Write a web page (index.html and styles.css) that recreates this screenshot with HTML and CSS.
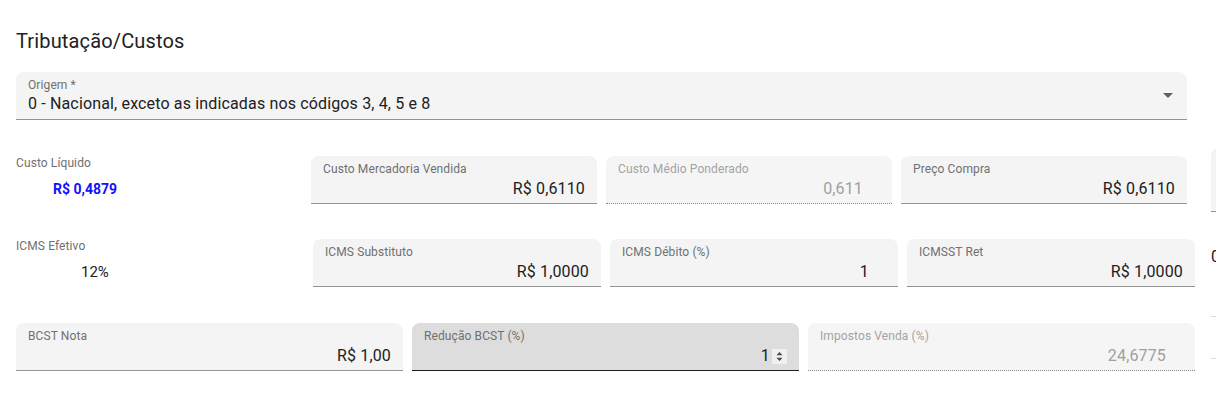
FILE: index.html
```html
<!DOCTYPE html>
<html lang="pt-BR">
<head>
<meta charset="utf-8">
<title>Tributação/Custos</title>
<link rel="stylesheet" href="styles.css">
</head>
<body>
<main class="page">
  <h2 class="title">Tributação/Custos</h2>

  <div class="field select">
    <div class="select-text">
      <span class="label">Origem *</span>
      <span class="select-value">0 - Nacional, exceto as indicadas nos códigos 3, 4, 5 e 8</span>
    </div>
    <svg class="arrow" viewBox="0 0 10 5" width="10" height="5" aria-hidden="true"><path d="M0 0l5 5 5-5z"/></svg>
  </div>

  <div class="row row-1">
    <div class="cell stat">
      <span class="stat-label">Custo Líquido</span>
      <span class="stat-value blue">R$ 0,4879</span>
    </div>
    <div class="cell field">
      <span class="label">Custo Mercadoria Vendida</span>
      <span class="value">R$ 0,6110</span>
    </div>
    <div class="cell field disabled">
      <span class="label">Custo Médio Ponderado</span>
      <span class="value num">0,611</span>
    </div>
    <div class="cell field">
      <span class="label">Preço Compra</span>
      <span class="value">R$ 0,6110</span>
    </div>
    <div class="edge-field"></div>
  </div>

  <div class="row row-2">
    <div class="cell stat">
      <span class="stat-label">ICMS Efetivo</span>
      <span class="stat-value pct">12%</span>
    </div>
    <div class="cell field">
      <span class="label">ICMS Substituto</span>
      <span class="value">R$ 1,0000</span>
    </div>
    <div class="cell field">
      <span class="label">ICMS Débito (%)</span>
      <span class="value num">1</span>
    </div>
    <div class="cell field">
      <span class="label">ICMSST Ret</span>
      <span class="value">R$ 1,0000</span>
    </div>
    <span class="edge-text">0</span>
  </div>

  <div class="row row-3">
    <div class="cell field">
      <span class="label">BCST Nota</span>
      <span class="value">R$ 1,00</span>
    </div>
    <div class="cell field hovered">
      <span class="label">Redução BCST (%)</span>
      <span class="value spin-value">1<svg class="spinner" viewBox="0 0 15 15" width="15" height="15" aria-hidden="true"><rect width="15" height="15" fill="#f0f0f0"/><path d="M4.5 6.3L7.5 3 10.5 6.3z" fill="#4a4a4a"/><path d="M4.5 8.7L10.5 8.7 7.5 12z" fill="#4a4a4a"/></svg></span>
    </div>
    <div class="cell field disabled">
      <span class="label">Impostos Venda (%)</span>
      <span class="value num">24,6775</span>
    </div>
    <div class="edge-lines"></div>
  </div>
</main>
</body>
</html>
```

FILE: styles.css
```css
html, body {
  margin: 0;
  padding: 0;
  overflow: hidden;
  background: #ffffff;
}

body {
  width: 1216px;
  height: 401px;
  font-family: Roboto, "Noto Sans", "Liberation Sans", Arial, sans-serif;
  color: #212121;
}

.page {
  padding: 29px 0 0 16px;
}

.title {
  margin: 0;
  font-size: 20px;
  line-height: 24px;
  font-weight: 400;
  letter-spacing: 0.15px;
  color: #212121;
}

/* filled text field */
.field {
  box-sizing: border-box;
  height: 48px;
  flex-shrink: 0;
  display: flex;
  flex-direction: column;
  padding: 5px 12px 0;
  background: #f4f4f4;
  border-radius: 8px 8px 0 0;
  border-bottom: 1px solid #949494;
}

.label {
  font-size: 12px;
  line-height: 16px;
  letter-spacing: 0.1px;
  color: #707070;
  white-space: nowrap;
}

.value {
  font-size: 16px;
  line-height: 20px;
  margin-top: 2px;
  letter-spacing: 0.15px;
  text-align: right;
  color: #212121;
  white-space: nowrap;
}

.value.num {
  margin-right: 17px;
}

.field.disabled {
  background: #f5f5f5;
  border-bottom: 1px dotted #8a8a8a;
}

.field.disabled .label {
  color: #a3a3a3;
}

.field.disabled .value {
  color: #a0a0a0;
}

.field.hovered {
  background: #dddddd;
  border-bottom-color: #1e1e1e;
}

.spin-value {
  display: flex;
  justify-content: flex-end;
  align-items: center;
  gap: 2px;
}

.spinner {
  display: block;
}

/* select */
.select {
  width: 1171px;
  margin-top: 19px;
  padding: 0 14px 0 12px;
  flex-direction: row;
  align-items: center;
}

.select-text {
  flex: 1;
  align-self: stretch;
  display: flex;
  flex-direction: column;
  padding-top: 5px;
}

.select-value {
  font-size: 16px;
  line-height: 20px;
  margin-top: 1px;
  letter-spacing: 0.15px;
  color: #212121;
  white-space: nowrap;
}

.arrow {
  display: block;
  fill: #5f5f5f;
}

/* rows */
.row {
  display: flex;
  align-items: flex-start;
  gap: 9px;
  width: 1400px;
}

.row-1 {
  margin-top: 36px;
}

.row-2 {
  margin-top: 27px;
}

.row-3 {
  margin-top: 36px;
}

.row-1 .cell {
  width: 286px;
}

.row-2 .cell {
  width: 288px;
}

.row-3 .cell {
  width: 387px;
}

.stat {
  flex-shrink: 0;
  display: flex;
  flex-direction: column;
  margin-top: -1px;
}

.stat-label {
  font-size: 12px;
  line-height: 16px;
  letter-spacing: 0.1px;
  color: #707070;
}

.stat-value {
  margin-top: 8px;
  line-height: 20px;
  white-space: nowrap;
}

.stat-value.blue {
  font-size: 14px;
  font-weight: 700;
  color: #1010ff;
  padding-left: 37px;
}

.stat-value.pct {
  font-size: 15px;
  color: #212121;
  padding-left: 65px;
}

/* partially visible content at the right edge */
.edge-field {
  box-sizing: border-box;
  flex-shrink: 0;
  width: 80px;
  height: 64px;
  margin-top: -8px;
  margin-left: 15px;
  background: #f4f4f4;
  border-radius: 8px 8px 0 0;
  border-bottom: 1px solid #949494;
}

.edge-text {
  flex-shrink: 0;
  margin-left: 7px;
  margin-top: 8px;
  font-size: 16px;
  line-height: 20px;
  color: #212121;
}

.edge-lines {
  box-sizing: border-box;
  flex-shrink: 0;
  width: 60px;
  height: 43px;
  margin-top: -7px;
  margin-left: 7px;
  border-top: 1px solid #dcdcdc;
  border-bottom: 1px solid #dcdcdc;
}
```
